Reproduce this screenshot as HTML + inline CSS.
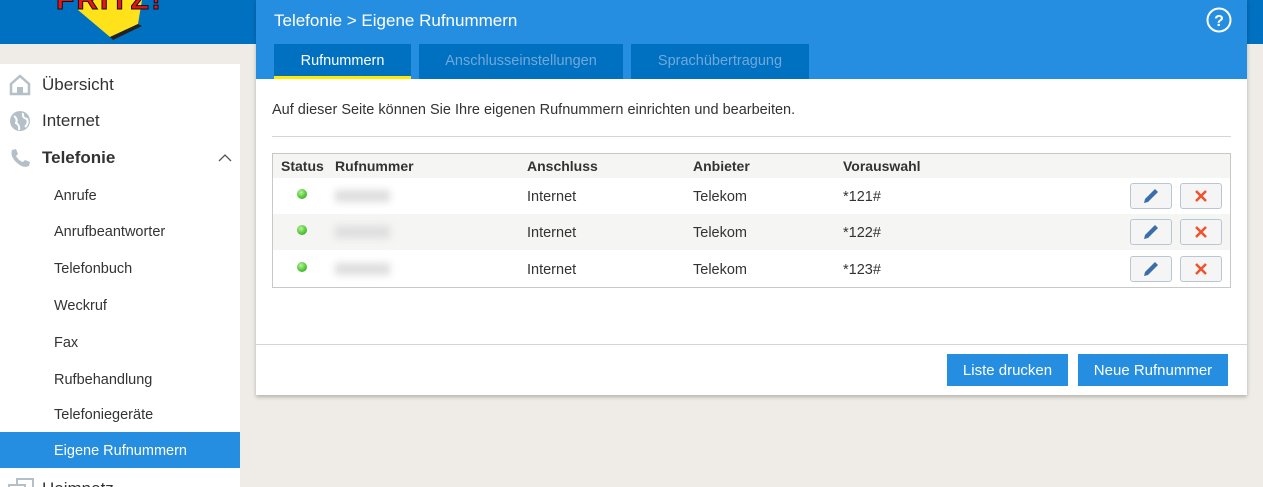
<!DOCTYPE html>
<html><head><meta charset="utf-8"><style>
*{margin:0;padding:0;box-sizing:border-box}
html,body{width:1263px;height:487px;overflow:hidden}
body{background:#efece7;font-family:"Liberation Sans",sans-serif;color:#333;position:relative;font-size:14px}
.top{position:absolute;left:0;top:0;width:1263px;height:44px;background:#0070c0}
.side{position:absolute;left:0;top:64px;width:240px;height:423px;background:#fff;overflow:hidden}
.side div{position:absolute;left:0;width:240px;height:36px;line-height:38px}
.l1{padding-left:42px;font-size:17px;color:#333}
.l2{padding-left:54px;font-size:14.5px;color:#333}
.panel{position:absolute;left:256px;top:0;width:991px;height:395px;background:#fff;box-shadow:0 2px 4px rgba(0,0,0,.25)}
.ph{position:absolute;left:0;top:0;width:991px;height:79px;background:#268ee0}
.tab{position:absolute;top:44px;height:35px;background:#0070c0;color:#6fa9dc;text-align:center;line-height:34px;font-size:14.5px}
.tbl{position:absolute;left:16px;top:153px;width:959px;height:135px;border:1px solid #c8c8c8}
.row{position:absolute;left:0;width:957px;height:36px;line-height:38px;font-size:14.5px}
.row span,.hd span{position:absolute}
.hd{position:absolute;left:0;top:0;width:957px;height:24px;line-height:25px;background:#f5f5f4;font-weight:bold;font-size:14px}
.dot{position:absolute;left:24px;top:11px;width:10px;height:10px;border-radius:50%;background:radial-gradient(circle at 40% 35%,#b9f29a,#4cc431 60%,#2f9a1c)}
.blur{position:absolute;left:62px;top:12px;width:55px;height:12px;background:#ddd;filter:blur(4px)}
.b{position:absolute;top:5px;width:42px;height:26px;border:1px solid #b9c7d3;border-radius:3px;background:#f5f5f5}
.btn{position:absolute;top:354px;height:32px;background:#268ee0;color:#fff;font-size:15px;line-height:34px;text-align:center}
</style></head><body>
<div class="top"></div>
<svg style="position:absolute;left:40px;top:0" width="150" height="44" viewBox="0 0 150 44">
<path d="M40 0 L102 0 L98 24 L70 37 L38 10 Z" fill="#ffe21a"/>
<path d="M70 37 L98 24 L102 26 L73 40Z" fill="#222"/>
<text x="16" y="9" font-family="Liberation Sans" font-weight="bold" font-size="30" fill="#e8141d" stroke="#111" stroke-width="1" letter-spacing="2">FRITZ!</text>
</svg>
<div class="side">
<div class="l1" style="top:2px"><svg style="position:absolute;left:9px;top:8px" width="22" height="22"><path d="M2 10 L11 2 L20 10 V20 H2Z" fill="none" stroke="#b5bfc7" stroke-width="2.5"/><rect x="8" y="13" width="6" height="7" fill="#b5bfc7"/></svg>Übersicht</div>
<div class="l1" style="top:38px"><svg style="position:absolute;left:9px;top:8px" width="22" height="22"><circle cx="11" cy="11" r="10" fill="#b5bfc7"/><path d="M5 6 q4 3 2 7 q4 2 3 7 M14 3 q-1 5 4 6 q2 4 -2 8" stroke="#fff" stroke-width="2" fill="none"/></svg>Internet</div>
<div class="l1" style="top:75px;font-weight:bold"><svg style="position:absolute;left:9px;top:8px" width="22" height="22"><path d="M3 3 L7 2 L9 7 L7 9 Q10 14 14 15 L16 13 L21 15 L20 19 Q14 22 7 15 Q1 9 3 3Z" fill="#b5bfc7"/></svg>Telefonie<svg style="position:absolute;left:218px;top:14px" width="14" height="9"><path d="M1 8 L7 2 L13 8" stroke="#555" stroke-width="1.3" fill="none"/></svg></div>
<div class="l2" style="top:113px">Anrufe</div>
<div class="l2" style="top:149px">Anrufbeantworter</div>
<div class="l2" style="top:186px">Telefonbuch</div>
<div class="l2" style="top:223px">Weckruf</div>
<div class="l2" style="top:260px">Fax</div>
<div class="l2" style="top:297px">Rufbehandlung</div>
<div class="l2" style="top:332px">Telefoniegeräte</div>
<div class="l2" style="top:368px;background:#268ee0;color:#fff">Eigene Rufnummern</div>
<div class="l1" style="top:406px">Heimnetz<svg style="position:absolute;left:7px;top:8px" width="28" height="20"><rect x="10" y="1" width="16" height="11" fill="none" stroke="#b5bfc7" stroke-width="2"/><rect x="2" y="7" width="16" height="11" fill="#fff" stroke="#b5bfc7" stroke-width="2"/></svg></div>
</div>
<div class="panel">
<div class="ph"></div>
<div style="position:absolute;left:18px;top:11px;color:#fff;font-size:17px">Telefonie &gt; Eigene Rufnummern</div>
<svg style="position:absolute;left:950px;top:7px" width="26" height="26"><circle cx="13" cy="13" r="11.5" fill="none" stroke="#fff" stroke-width="2"/><text x="13" y="19" text-anchor="middle" fill="#fff" font-family="Liberation Sans" font-weight="bold" font-size="16">?</text></svg>
<div class="tab" style="left:18px;width:137px;color:#fff;border-bottom:3px solid #ffea00">Rufnummern</div>
<div class="tab" style="left:163px;width:204px">Anschlusseinstellungen</div>
<div class="tab" style="left:375px;width:178px">Sprachübertragung</div>
<div style="position:absolute;left:16px;top:102px;font-size:14.5px">Auf dieser Seite können Sie Ihre eigenen Rufnummern einrichten und bearbeiten.</div>
<div style="position:absolute;left:16px;top:136px;width:959px;height:1px;background:#d5d5d5"></div>
<div class="tbl">
<div class="hd"><span style="left:8px">Status</span><span style="left:62px">Rufnummer</span><span style="left:254px">Anschluss</span><span style="left:420px">Anbieter</span><span style="left:570px">Vorauswahl</span></div>
<div class="row" style="top:24px"><i class="dot"></i><i class="blur"></i><span style="left:254px">Internet</span><span style="left:420px">Telekom</span><span style="left:570px">*121#</span><i class="b" style="left:857px"><svg width="40" height="24"><path d="M13 19 L14 15 L24 5 L27 8 L17 18Z" fill="#3a6ea8"/></svg></i><i class="b" style="left:907px"><svg width="40" height="24"><path d="M15 7 L25 17 M25 7 L15 17" stroke="#f0522d" stroke-width="2.5"/></svg></i></div>
<div class="row" style="top:60px;background:#f5f5f4"><i class="dot"></i><i class="blur"></i><span style="left:254px">Internet</span><span style="left:420px">Telekom</span><span style="left:570px">*122#</span><i class="b" style="left:857px"><svg width="40" height="24"><path d="M13 19 L14 15 L24 5 L27 8 L17 18Z" fill="#3a6ea8"/></svg></i><i class="b" style="left:907px"><svg width="40" height="24"><path d="M15 7 L25 17 M25 7 L15 17" stroke="#f0522d" stroke-width="2.5"/></svg></i></div>
<div class="row" style="top:97px"><i class="dot"></i><i class="blur"></i><span style="left:254px">Internet</span><span style="left:420px">Telekom</span><span style="left:570px">*123#</span><i class="b" style="left:857px"><svg width="40" height="24"><path d="M13 19 L14 15 L24 5 L27 8 L17 18Z" fill="#3a6ea8"/></svg></i><i class="b" style="left:907px"><svg width="40" height="24"><path d="M15 7 L25 17 M25 7 L15 17" stroke="#f0522d" stroke-width="2.5"/></svg></i></div>
</div>
<div style="position:absolute;left:0;top:344px;width:991px;height:1px;background:#d5d5d5"></div>
<div class="btn" style="left:691px;width:121px">Liste drucken</div>
<div class="btn" style="left:822px;width:150px">Neue Rufnummer</div>
</div>
</body></html>
